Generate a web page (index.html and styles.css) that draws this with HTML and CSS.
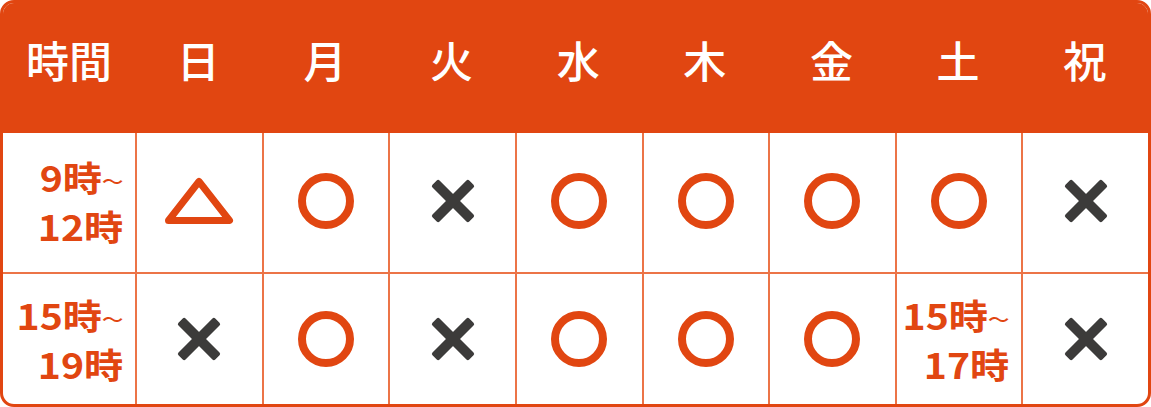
FILE: index.html
```html
<!DOCTYPE html>
<html lang="ja">

<head>
  <meta charset="UTF-8">
  <meta name="viewport" content="width=device-width, initial-scale=1.0">
  <title>診療時間</title>
  <link rel="stylesheet" href="styles.css">
</head>

<body>
  <div class="schedule">
    <table class="schedule-table">
      <colgroup>
        <col class="col-time">
        <col span="8">
      </colgroup>
      <thead>
        <tr class="head-row">
          <th>時間</th>
          <th>日</th>
          <th>月</th>
          <th>火</th>
          <th>水</th>
          <th>木</th>
          <th>金</th>
          <th>土</th>
          <th>祝</th>
        </tr>
      </thead>
      <tbody>
        <tr class="row-am">
          <td class="time"><span class="time-text">9時<span class="tilde">〜</span><br>12時</span></td>
          <td>
            <svg class="mark-tri" viewBox="0 0 70 48"><polygon points="35,4.5 65.5,43.5 4.5,43.5" /></svg>
          </td>
          <td><svg class="mark-ok" viewBox="0 0 56 56"><circle cx="28" cy="28" r="24" /></svg></td>
          <td><svg class="mark-ng" viewBox="0 0 44 44"><rect x="-4" y="17" width="52" height="10" rx="2" transform="rotate(45 22 22)" /><rect x="-4" y="17" width="52" height="10" rx="2" transform="rotate(-45 22 22)" /></svg></td>
          <td><svg class="mark-ok" viewBox="0 0 56 56"><circle cx="28" cy="28" r="24" /></svg></td>
          <td><svg class="mark-ok" viewBox="0 0 56 56"><circle cx="28" cy="28" r="24" /></svg></td>
          <td><svg class="mark-ok" viewBox="0 0 56 56"><circle cx="28" cy="28" r="24" /></svg></td>
          <td><svg class="mark-ok" viewBox="0 0 56 56"><circle cx="28" cy="28" r="24" /></svg></td>
          <td><svg class="mark-ng" viewBox="0 0 44 44"><rect x="-4" y="17" width="52" height="10" rx="2" transform="rotate(45 22 22)" /><rect x="-4" y="17" width="52" height="10" rx="2" transform="rotate(-45 22 22)" /></svg></td>
        </tr>
        <tr class="row-pm">
          <td class="time"><span class="time-text">15時<span class="tilde">〜</span><br>19時</span></td>
          <td><svg class="mark-ng" viewBox="0 0 44 44"><rect x="-4" y="17" width="52" height="10" rx="2" transform="rotate(45 22 22)" /><rect x="-4" y="17" width="52" height="10" rx="2" transform="rotate(-45 22 22)" /></svg></td>
          <td><svg class="mark-ok" viewBox="0 0 56 56"><circle cx="28" cy="28" r="24" /></svg></td>
          <td><svg class="mark-ng" viewBox="0 0 44 44"><rect x="-4" y="17" width="52" height="10" rx="2" transform="rotate(45 22 22)" /><rect x="-4" y="17" width="52" height="10" rx="2" transform="rotate(-45 22 22)" /></svg></td>
          <td><svg class="mark-ok" viewBox="0 0 56 56"><circle cx="28" cy="28" r="24" /></svg></td>
          <td><svg class="mark-ok" viewBox="0 0 56 56"><circle cx="28" cy="28" r="24" /></svg></td>
          <td><svg class="mark-ok" viewBox="0 0 56 56"><circle cx="28" cy="28" r="24" /></svg></td>
          <td class="time"><span class="time-text">15時<span class="tilde">〜</span><br>17時</span></td>
          <td><svg class="mark-ng" viewBox="0 0 44 44"><rect x="-4" y="17" width="52" height="10" rx="2" transform="rotate(45 22 22)" /><rect x="-4" y="17" width="52" height="10" rx="2" transform="rotate(-45 22 22)" /></svg></td>
        </tr>
      </tbody>
    </table>
  </div>
</body>

</html>
```

FILE: styles.css
```css
/* Estilo geral */
* {
  margin: 0;
  padding: 0;
  box-sizing: border-box;
}

body {
  font-family: "Noto Sans CJK JP", "Noto Sans", sans-serif;
  background: #fff;
  width: 1151px;
  height: 407px;
  overflow: hidden;
}

.schedule {
  width: 1151px;
  height: 407px;
  border: 3px solid #e14611;
  border-radius: 14px;
  overflow: hidden;
  background: #fff;
}

.schedule-table {
  width: 100%;
  height: 100%;
  table-layout: fixed;
  border-collapse: separate;
  border-spacing: 0;
}

.col-time {
  width: 132px;
}

/* Cabeçalho */
.head-row {
  height: 130px;
  background: #e14611;
}

.head-row th {
  color: #fff;
  font-size: 43px;
  font-weight: 500;
  line-height: 1;
  padding-bottom: 18px;
  text-align: center;
  vertical-align: middle;
}

/* Corpo */
.row-am {
  height: 139px;
}

.row-pm {
  height: 132px;
}

td {
  text-align: center;
  vertical-align: middle;
  border-left: 2px solid #ec7447;
}

td:first-child {
  border-left: none;
}

.row-am td {
  padding-bottom: 4px;
}

.row-pm td {
  border-top: 2px solid #ec7447;
}

td.time {
  text-align: right;
  padding-right: 12px;
}

.time-text {
  display: inline-block;
  color: #e14611;
  font-size: 35px;
  font-weight: 700;
  line-height: 45px;
  transform: scaleX(1.12);
  transform-origin: right center;
  white-space: nowrap;
}

.tilde {
  font-size: 19px;
  font-weight: 500;
  vertical-align: 3px;
}

svg {
  display: block;
  margin: 0 auto;
}

.mark-ok {
  width: 56px;
  height: 56px;
}

.mark-ok circle {
  fill: none;
  stroke: #e14611;
  stroke-width: 8;
}

.mark-ng {
  width: 44px;
  height: 44px;
}

.mark-ng rect {
  fill: #3c3b3a;
}

.mark-tri {
  width: 70px;
  height: 48px;
}

.mark-tri polygon {
  fill: none;
  stroke: #e14611;
  stroke-width: 7;
  stroke-linejoin: round;
}
```
